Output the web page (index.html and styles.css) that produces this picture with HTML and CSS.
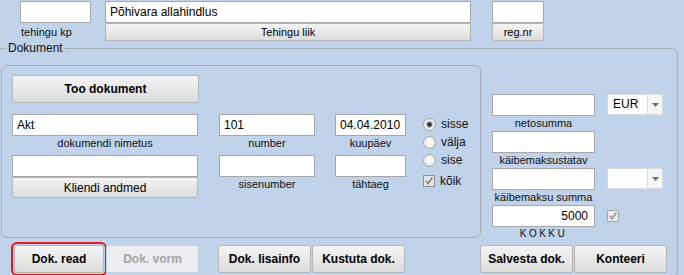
FILE: index.html
```html
<!DOCTYPE html>
<html lang="et">
<head>
    <meta charset="UTF-8">
    <title>Tehing</title>
    <link rel="stylesheet" href="styles.css">
</head>
<body>
<div class="top">
    <div class="fld kp">
        <input class="inp" type="text" value="">
        <div class="cap cap-left">tehingu kp</div>
    </div>
    <div class="fld liik">
        <input class="inp" type="text" value="Põhivara allahindlus">
        <button class="btn btn-sm">Tehingu liik</button>
    </div>
    <div class="fld regnr">
        <input class="inp" type="text" value="">
        <button class="btn btn-sm">reg.nr</button>
    </div>
</div>

<div class="doc">
    <span class="legend">Dokument</span>
    <div class="doc-main">
        <div class="panel">
            <button class="btn btn-big too">Too dokument</button>
            <div class="cols">
                <div class="col c1">
                    <input class="inp" type="text" value="Akt">
                    <div class="cap">dokumendi nimetus</div>
                    <input class="inp" type="text" value="">
                    <button class="btn btn-md">Kliendi andmed</button>
                </div>
                <div class="col c2">
                    <input class="inp" type="text" value="101">
                    <div class="cap">number</div>
                    <input class="inp" type="text" value="">
                    <div class="cap">sisenumber</div>
                </div>
                <div class="col c3">
                    <input class="inp" type="text" value="04.04.2010">
                    <div class="cap">kuupäev</div>
                    <input class="inp" type="text" value="">
                    <div class="cap">tähtaeg</div>
                </div>
                <div class="opts">
                    <div class="opt"><span class="radio on"></span>sisse</div>
                    <div class="opt"><span class="radio"></span>välja</div>
                    <div class="opt"><span class="radio"></span>sise</div>
                    <div class="opt opt-chk">
                        <span class="chk"><svg width="10" height="10" viewBox="0 0 10 10"><path d="M1.8 4.8 L4 7.6 L8.4 1.4" fill="none" stroke="#8a8a8a" stroke-width="1.7"/></svg></span>kõik
                    </div>
                </div>
            </div>
        </div>

        <div class="sums">
            <div class="sum-row">
                <div class="sum-fld">
                    <input class="inp" type="text" value="">
                    <div class="cap">netosumma</div>
                </div>
                <div class="sel">
                    <span class="sel-val">EUR</span>
                    <span class="sel-arr"><svg width="7" height="4" viewBox="0 0 7 4"><path d="M0 0 H7 L3.5 4 Z" fill="#707070"/></svg></span>
                </div>
            </div>
            <div class="sum-row">
                <div class="sum-fld">
                    <input class="inp" type="text" value="">
                    <div class="cap">käibemaksustatav</div>
                </div>
            </div>
            <div class="sum-row">
                <div class="sum-fld">
                    <input class="inp" type="text" value="">
                    <div class="cap">käibemaksu summa</div>
                </div>
                <div class="sel">
                    <span class="sel-val"></span>
                    <span class="sel-arr"><svg width="7" height="4" viewBox="0 0 7 4"><path d="M0 0 H7 L3.5 4 Z" fill="#707070"/></svg></span>
                </div>
            </div>
            <div class="sum-row">
                <div class="sum-fld">
                    <input class="inp inp-num" type="text" value="5000">
                    <div class="cap kokku">KOKKU</div>
                </div>
                <span class="chk chk-light"><svg width="10" height="10" viewBox="0 0 10 10"><path d="M1.8 4.8 L4 7.6 L8.4 1.4" fill="none" stroke="#9a9a9a" stroke-width="1.7"/></svg></span>
            </div>
        </div>
    </div>

    <div class="actions">
        <div class="grp">
            <button class="btn btn-big act read">Dok. read</button>
            <button class="btn btn-big act off">Dok. vorm</button>
        </div>
        <div class="grp grp-mid">
            <button class="btn btn-big act">Dok. lisainfo</button>
            <button class="btn btn-big act">Kustuta dok.</button>
        </div>
        <div class="grp grp-right">
            <button class="btn btn-big act">Salvesta dok.</button>
            <button class="btn btn-big act">Konteeri</button>
        </div>
    </div>
</div>
</body>
</html>
```

FILE: styles.css
```css
*{
    padding: 0;
    margin: 0;
}
html, body{
    height: 275px;
}
body{
    background-color: #c0d3ea;
    font-family: "Liberation Sans", Arial, sans-serif;
    font-size: 11px;
    color: #111111;
    overflow: hidden;
}

/* shared controls */
.inp{
    display: block;
    box-sizing: border-box;
    width: 100%;
    height: 22px;
    border: 1px solid #a7a7a7;
    background-color: #ffffff;
    padding: 0 4px;
    font-family: "Liberation Sans", Arial, sans-serif;
    font-size: 12px;
    color: #000000;
    outline: none;
}
.inp-num{
    text-align: right;
    padding-right: 6px;
}
.btn{
    display: block;
    box-sizing: border-box;
    width: 100%;
    border: 1px solid #b6b6b6;
    border-radius: 2px;
    background: linear-gradient(#f4f4f4, #dcdcdc);
    font-family: "Liberation Sans", Arial, sans-serif;
    font-size: 11px;
    color: #000000;
}
.btn-sm{
    height: 18px;
}
.btn-md{
    height: 21px;
    font-size: 12px;
}
.btn-big{
    height: 28px;
    font-size: 12px;
    font-weight: bold;
}
.cap{
    line-height: 15px;
    margin-bottom: 4px;
    text-align: center;
}

/* top row */
.top{
    display: flex;
    padding: 1px 0 0 20px;
}
.kp{
    width: 71px;
}
.kp .cap{
    text-align: left;
    padding-left: 1px;
    margin-top: 2px;
    line-height: 14px;
}
.liik{
    width: 366px;
    margin-left: 14px;
}
.regnr{
    width: 52px;
    margin-left: 21px;
}

/* Dokument group */
.doc{
    position: relative;
    margin: 5px 6px 0 -4px;
    border: 1px solid #a2abb7;
    border-radius: 6px;
    padding-bottom: 3px;
}
.legend{
    position: absolute;
    left: 9px;
    top: -8px;
    padding: 0 2px;
    line-height: 14px;
    font-size: 12px;
    background-color: #c0d3ea;
}
.doc-main{
    display: flex;
    align-items: flex-start;
}
.panel{
    box-sizing: border-box;
    width: 480px;
    height: 173px;
    margin: 16px 0 0 4px;
    padding: 9px 0 0 10px;
    border: 1px solid #a2abb7;
    border-radius: 6px;
}
.too{
    width: 187px;
}
.cols{
    display: flex;
    align-items: flex-start;
    margin-top: 11px;
}
.c1{
    width: 186px;
}
.c2{
    width: 96px;
    margin-left: 21px;
}
.c3{
    width: 71px;
    margin-left: 20px;
}
.opts{
    margin-left: 17px;
    padding-top: 1px;
}
.opt{
    display: flex;
    align-items: center;
    height: 18px;
    font-size: 12px;
}
.opt-chk{
    margin-top: 3px;
}
.radio{
    box-sizing: border-box;
    width: 13px;
    height: 13px;
    margin-right: 5px;
    border: 1px solid #a3a3a3;
    border-radius: 50%;
    background: radial-gradient(circle at 50% 45%, #ffffff, #e2e2e2);
}
.radio.on{
    background: radial-gradient(circle at 50% 50%, #2f2f2f 0, #2f2f2f 1.6px, #9a9a9a 2.6px, #f4f4f4 3.8px, #e2e2e2 100%);
}
.chk{
    display: flex;
    align-items: center;
    justify-content: center;
    box-sizing: border-box;
    width: 12px;
    height: 12px;
    margin-right: 5px;
    border: 1px solid #8e8e8e;
    background-color: #e6e6e6;
}
.chk-light{
    border-color: #a9a9a9;
    background-color: #eaeaea;
    margin: 5px 0 0 12px;
}

/* sums column */
.sums{
    margin: 45px 0 0 11px;
}
.sum-row{
    display: flex;
    align-items: flex-start;
}
.sum-fld{
    width: 103px;
}
.sum-fld .cap{
    margin-bottom: 0;
}
.kokku{
    font-size: 10px;
    letter-spacing: 2.5px;
    line-height: 13px;
}
.sel{
    display: flex;
    box-sizing: border-box;
    width: 56px;
    height: 21px;
    margin-left: 12px;
    border: 1px solid #dcdcdc;
    background-color: #ffffff;
}
.sel-val{
    flex: 1;
    padding-left: 5px;
    line-height: 19px;
    font-size: 12px;
    color: #000000;
}
.sel-arr{
    display: flex;
    align-items: center;
    justify-content: center;
    width: 14px;
    border-left: 1px solid #dcdcdc;
    background-color: #f6f6f6;
}

/* bottom buttons */
.actions{
    display: flex;
    margin-top: 5px;
    padding-left: 17px;
}
.grp{
    display: flex;
}
.act{
    width: 93px;
    margin-right: 1px;
}
.read{
    width: 90px;
    margin-right: 2px;
    border-radius: 3px;
    outline: 2px solid #e01b22;
    outline-offset: 1px;
}
.off{
    color: #a4a4a4;
    border-color: #cbd0d6;
    background: #eceef1;
}
.grp-mid{
    margin-left: 18px;
}
.grp-right{
    margin-left: 74px;
}
```
